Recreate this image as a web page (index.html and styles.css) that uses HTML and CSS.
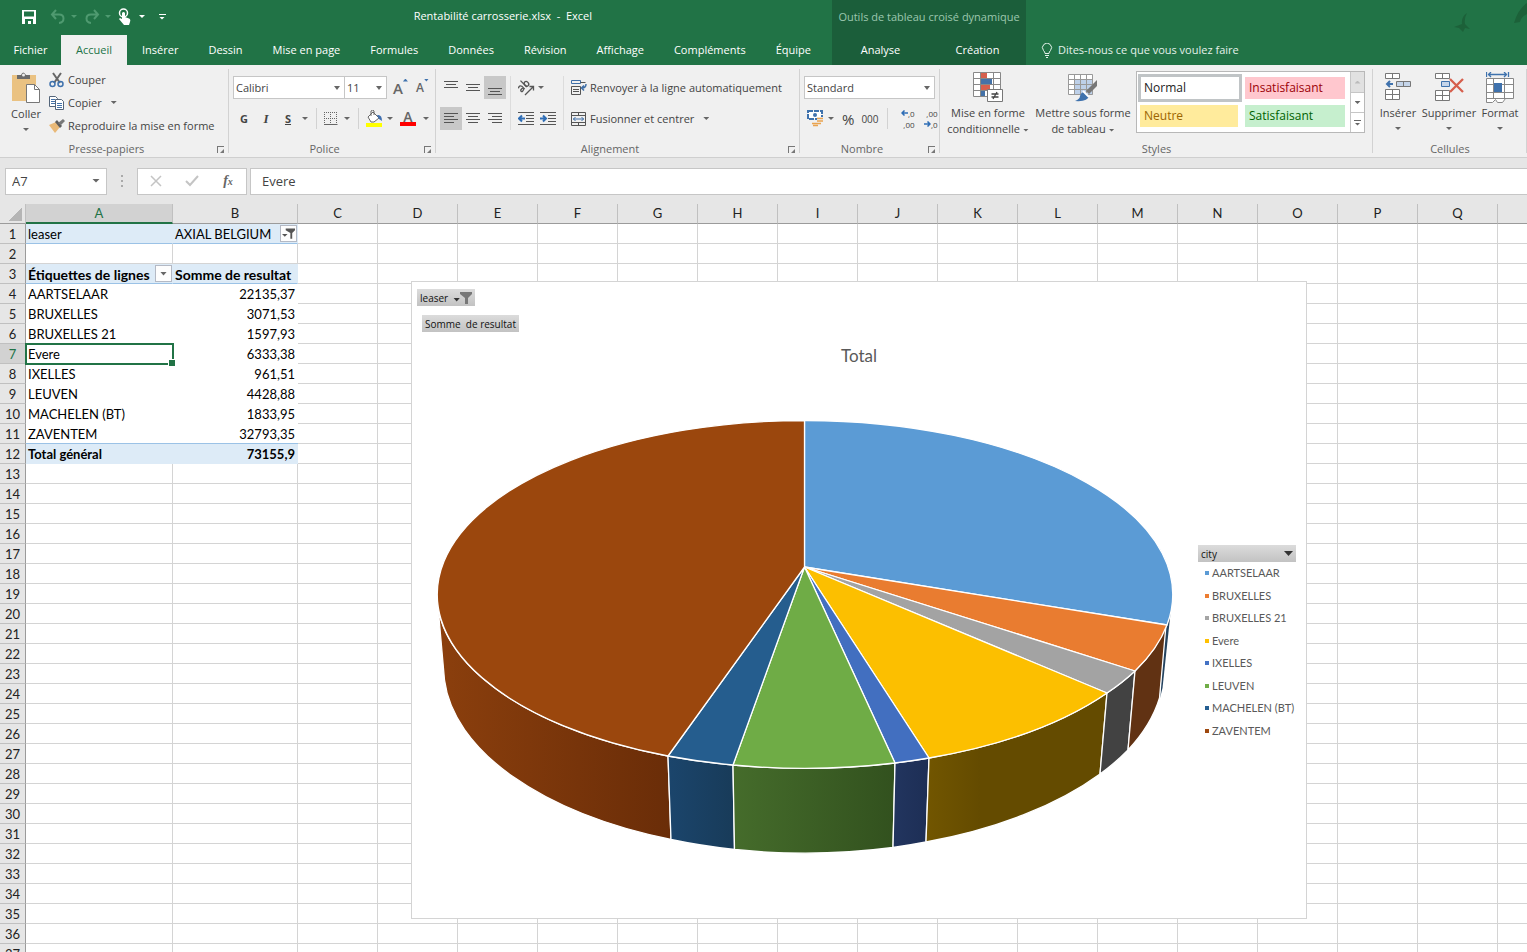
FILE: index.html
```html
<!DOCTYPE html>
<html lang="fr">
<head>
<meta charset="utf-8">
<title>Rentabilité carrosserie.xlsx - Excel</title>
<link rel="stylesheet" href="styles.css">
</head>
<body>
<header class="top">
  <div class="quick">
    <button class="ico" aria-label="Enregistrer"><svg width="16" height="16" viewBox="0 0 16 16"><path d="M1 1h14v14H1z" fill="#fff"/><path d="M3 2.500h10v5H3zM4 10h8v5h-2v-3H7v3H4z" fill="#217346"/></svg></button>
    <button class="ico dim" aria-label="Annuler"><svg width="16" height="16" viewBox="0 0 16 16" fill="none" stroke="#4f9a70" stroke-width="2"><path d="M6 1L2 5.500L6 10M2 5.500h7c6 0 6 8 0 8.500"/></svg><i class="arr"></i></button>
    <button class="ico dim" aria-label="Rétablir"><svg width="16" height="16" viewBox="0 0 16 16" fill="none" stroke="#4f9a70" stroke-width="2"><path d="M10 1l4 4.500L10 10M14 5.500H7c-6 0-6 8 0 8.500"/></svg><i class="arr"></i></button>
    <button class="ico touch" aria-label="Mode tactile"><svg width="14" height="18" viewBox="0 0 14 18"><circle cx="5.500" cy="5" r="4" fill="none" stroke="#fff" stroke-width="1.500"/><path d="M4 5q1.500-2 3 0v4l4 1.500q2 1 1 3.500l-1 3H6L1 11l1-1 2 1z" fill="#fff"/></svg><i class="arr"></i></button>
    <button class="ico more" aria-label="Personnaliser"><i class="bar"></i><i class="arr"></i></button>
  </div>
  <h1 class="doc">Rentabilité carrosserie.xlsx&nbsp; -&nbsp; Excel</h1>
  <svg class="birds" width="80" height="40" viewBox="0 0 80 40" fill="#1c6139"><path d="M20 13q-6 4-5 11l-8 3 5 1 4 4 2-4 5 1-5-5q-1-6 2-11zM80 3q-9 6-13 20l6-1q1-5 7-8z"/></svg>
  <nav class="tabs">
    <a href="#" class="tab file">Fichier</a><a href="#" class="tab on">Accueil</a><a href="#" class="tab">Insérer</a><a href="#" class="tab">Dessin</a><a href="#" class="tab">Mise en page</a><a href="#" class="tab">Formules</a><a href="#" class="tab">Données</a><a href="#" class="tab">Révision</a><a href="#" class="tab">Affichage</a><a href="#" class="tab">Compléments</a><a href="#" class="tab">Équipe</a>
  </nav>
  <div class="context">
    <span class="context-name">Outils de tableau croisé dynamique</span>
    <div class="context-tabs"><a href="#" class="tab">Analyse</a><a href="#" class="tab">Création</a></div>
  </div>
  <button class="tell"><svg width="12" height="15" viewBox="0 0 12 15" fill="none" stroke="#e4f1ea"><path d="M4 10.500Q4 9 2.500 7.500a4.500 4.500 0 1 1 7 0Q8 9 8 10.500zM4 12.500h4M5 14.500h2"/></svg>Dites-nous ce que vous voulez faire</button>
</header>

<section class="ribbon">
  <div class="group clip">
    <div class="body">
      <button class="big"><svg width="30" height="32" viewBox="0 0 30 32"><path d="M1 3h24v26H1z" fill="#eac282"/><path d="M6 7V3h4q2-5 5 0h4v4z" fill="#6b6b6b"/><circle cx="12.500" cy="3" r="1.500" fill="#eee"/><path d="M15.500 12.500h8l5 5v13h-13z" fill="#fff" stroke="#777"/><path d="M23.500 12.500v5h5" fill="none" stroke="#777"/></svg><span>Coller</span><i class="arr"></i></button>
      <div class="stack">
        <button><svg width="16" height="16" viewBox="0 0 16 16" fill="none"><path d="M4 1l7 10M12 1L5 11" stroke="#666" stroke-width="2"/><circle cx="3.500" cy="12" r="2.500" stroke="#3f72ad" stroke-width="1.500"/><circle cx="11.500" cy="12" r="2.500" stroke="#3f72ad" stroke-width="1.500"/></svg>Couper</button>
        <button><svg width="16" height="16" viewBox="0 0 16 16" fill="#fff" stroke="#54657a"><path d="M.5 1.500h6l2 2v8h-8z"/><path d="M2 4.500h4M2 6.500h4M2 8.500h4" stroke="#4472a8"/><path d="M6.500 4.500h6l2 2v8h-8z"/><path d="M8 8.500h5M8 10.500h5M8 12.500h5" stroke="#4472a8"/></svg>Copier<i class="arr far"></i></button>
        <button><svg width="16" height="16" viewBox="0 0 16 16"><path d="M0 7l7-3 4 5-5 6z" fill="#e9b978"/><path d="M6 4l2-2 5 6-2 2z" fill="#5d5d5d"/><path d="M9 5l5-4 2 2-4 4z" fill="#777"/></svg>Reproduire la mise en forme</button>
      </div>
    </div>
    <div class="foot"><span>Presse-papiers</span><button class="launch" aria-label="Options du presse-papiers"></button></div>
  </div>

  <div class="group font">
    <div class="body rows">
      <div class="line">
        <label class="combo name"><select aria-label="Police"><option>Calibri</option></select></label><label class="combo size"><select aria-label="Taille"><option>11</option></select></label>
        <button class="grow">A<i class="up"></i></button><button class="shrink">A<i class="down"></i></button>
      </div>
      <div class="line marks">
        <button class="m b">G</button><button class="m it">I</button><button class="m u">S</button><i class="arr"></i><i class="sep"></i>
        <button class="pic" aria-label="Bordures"><svg width="14" height="14" viewBox="0 0 14 14" stroke="#666"><path d="M.5 0v12M6.500 0v12M12.500 0v12M0 .5h13M0 6.500h13" stroke-dasharray="1 1"/><path d="M0 12.500h13.500"/></svg><i class="arr"></i></button><i class="sep"></i>
        <button class="pic" aria-label="Couleur de remplissage"><svg width="17" height="17" viewBox="0 0 17 17"><path d="M2 7l5-5 6 6-5 4H5z" fill="#fff" stroke="#666"/><path d="M5 6V1q2-2 3 0v4" fill="none" stroke="#666"/><path d="M11 5q5-1 5 6l-3-2z" fill="#3f6fb0"/><path d="M0 13h16v4H0z" fill="#ff0"/></svg><i class="arr"></i></button>
        <button class="pic color" aria-label="Couleur de police"><span>A</span><i class="arr"></i></button>
      </div>
    </div>
    <div class="foot"><span>Police</span><button class="launch" aria-label="Options de police"></button></div>
  </div>

  <div class="group align">
    <div class="body">
      <div class="aligns">
        <button class="a" aria-label="Haut"><svg width="14" height="14" viewBox="0 0 14 14" stroke="#555"><path d="M0 .5h14M2 3.500h10M0 6.500h14"/></svg></button>
        <button class="a" aria-label="Milieu"><svg width="14" height="14" viewBox="0 0 14 14" stroke="#555"><path d="M0 3.500h14M2 6.500h10M0 9.500h14"/></svg></button>
        <button class="a sel" aria-label="Bas"><svg width="14" height="14" viewBox="0 0 14 14" stroke="#555"><path d="M0 7.500h14M2 10.500h10M0 13.500h14"/></svg></button>
        <button class="a sel" aria-label="Gauche"><svg width="14" height="14" viewBox="0 0 14 14" stroke="#555"><path d="M0 1.500h14M0 4.500h10M0 7.500h14M0 10.500h10"/></svg></button>
        <button class="a" aria-label="Centre"><svg width="14" height="14" viewBox="0 0 14 14" stroke="#555"><path d="M0 1.500h14M2 4.500h10M0 7.500h14M2 10.500h10"/></svg></button>
        <button class="a" aria-label="Droite"><svg width="14" height="14" viewBox="0 0 14 14" stroke="#555"><path d="M0 1.500h14M4 4.500h10M0 7.500h14M4 10.500h10"/></svg></button>
      </div>
      <div class="orient">
        <button class="pic" aria-label="Orientation"><svg width="17" height="17" viewBox="0 0 17 17" fill="none" stroke="#555"><g transform="rotate(-45 6 8)" stroke-width="1.300"><path d="M1 5q3-2 4 1v4M5 8q-4-1-4 1t4 0"/><path d="M8 1v9"/><ellipse cx="10" cy="7.500" rx="2" ry="2.500"/></g><path d="M7 16l8-8M11.500 7.500h4v4" stroke-width="1.300"/></svg><i class="arr"></i></button>
        <div class="indents">
          <button class="pic" aria-label="Diminuer le retrait"><svg width="16" height="14" viewBox="0 0 16 14" stroke="#555"><path d="M0 .5h16M8 3.500h8M8 6.500h8M8 9.500h8M0 12.500h16"/><path d="M7 6.500H1M4 3.500L1 6.500l3 3" stroke="#2e6db5" stroke-width="2" fill="none"/></svg></button>
          <button class="pic" aria-label="Augmenter le retrait"><svg width="16" height="14" viewBox="0 0 16 14" stroke="#555"><path d="M0 .5h16M8 3.500h8M8 6.500h8M8 9.500h8M0 12.500h16"/><path d="M0 6.500h6M3 3.500l3 3-3 3" stroke="#2e6db5" stroke-width="2" fill="none"/></svg></button>
        </div>
      </div>
      <div class="wraps">
        <button><svg width="16" height="16" viewBox="0 0 16 16" fill="none" stroke="#555"><path d="M.5.5h9v3h-9z" stroke="#3f6fa8"/><path d="M.5 6.500h9v8h-9z"/><path d="M9.500 2.500h5M2 9.500h6M2 11.500h6"/><path d="M15 4q0 4-4 4M13 5.500L10.500 8l2.500 2.500" stroke="#3f6fa8" stroke-width="1.500"/></svg>Renvoyer à la ligne automatiquement</button>
        <button><svg width="16" height="16" viewBox="0 0 16 16" fill="none" stroke="#555"><path d="M.5 1.500h14v13H.5zM.5 4.500h14M.5 11.500h14M7.500 1v3M7.500 12v3"/><path d="M2 8h11M4.500 6L2.500 8l2 2M10.500 6l2 2-2 2" stroke="#3f6fa8"/></svg>Fusionner et centrer<i class="arr far"></i></button>
      </div>
    </div>
    <div class="foot"><span>Alignement</span><button class="launch" aria-label="Options d'alignement"></button></div>
  </div>

  <div class="group number">
    <div class="body rows">
      <div class="line"><label class="combo fmt"><select aria-label="Format de nombre"><option>Standard</option></select></label></div>
      <div class="line nums">
        <button class="pic" aria-label="Format comptable"><svg width="17" height="17" viewBox="0 0 17 17"><path d="M1 1h14v8H1z" fill="#fff" stroke="#3f72ad" stroke-width="2" stroke-dasharray="5 1"/><circle cx="8" cy="5" r="2" fill="#3f72ad"/><path d="M10 7h6v9H5v-4h5z" fill="#f0f0f0"/><path d="M10 8.500h6M10 11h6M5 13.500h5M10 13.500h4M6 15.500h5" stroke="#e9a34f" stroke-width="1.500"/></svg><i class="arr"></i></button>
        <button class="pct">%</button><button class="mil">000</button><i class="sep"></i>
        <button class="dec" aria-label="Ajouter une décimale"><span><svg width="7" height="6" viewBox="0 0 7 6" fill="none" stroke="#2e6db5" stroke-width="1.500"><path d="M7 3H1M3.500 .5L1 3l2.500 2.500"/></svg>,0</span><span>,00</span></button><button class="dec" aria-label="Réduire les décimales"><span>,00</span><span><svg width="7" height="6" viewBox="0 0 7 6" fill="none" stroke="#2e6db5" stroke-width="1.500"><path d="M0 3h6M3.500 .5L6 3 3.500 5.500"/></svg>,0</span></button>
      </div>
    </div>
    <div class="foot"><span>Nombre</span><button class="launch" aria-label="Options de nombre"></button></div>
  </div>

  <div class="group styles">
    <div class="body">
      <button class="big cond"><svg width="30" height="31" viewBox="0 0 30 31"><path d="M.5.5h27v24H.5z" fill="#fff"/><path d="M8 1h6v5H8zM8 13h9v5H8z" fill="#d65f4d"/><path d="M8 7h11v5H8zM8 19h4v6H8z" fill="#4472a8"/><path d="M.5.5h27v24H.5zM7.500.5v24M20.500.5v24M.5 6.500h27M.5 12.500h27M.5 18.500h27" fill="none" stroke="#888"/><path d="M14.500 17.500h15v12h-15z" fill="#fff" stroke="#777"/><path d="M18.500 22h7M18.500 25h7M24 20l-4 7" stroke="#444" stroke-width="1.300"/></svg><span>Mise en forme<br>conditionnelle <i class="arr"></i></span></button>
      <button class="big tabl"><svg width="30" height="31" viewBox="0 0 30 31"><path d="M.5 2.500h24v20H.5z" fill="#fff"/><path d="M7 8h18v15H7z" fill="#bdd0e9"/><path d="M.5 2.500h24v20H.5zM6.500 2.500v20M12.500 2.500v20M18.500 2.500v20M.5 7.500h24M.5 12.500h24M.5 17.500h24" fill="none" stroke="#999"/><path d="M29 8v6l-8 8-3-3z" fill="#777"/><path d="M17 20l4 4q-1 6-14 5 5-2 5-5 1-4 5-4z" fill="#3f72ad"/><path d="M15 19l6 6" stroke="#fff" stroke-width="2"/></svg><span>Mettre sous forme<br>de tableau <i class="arr"></i></span></button>
      <div class="gallery">
        <div class="swatches"><button class="sw normal">Normal</button><button class="sw bad">Insatisfaisant</button><button class="sw neutral">Neutre</button><button class="sw good">Satisfaisant</button></div>
        <div class="scroll"><button class="off" aria-label="Précédent"><i class="tri-up"></i></button><button aria-label="Suivant"><i class="arr"></i></button><button aria-label="Plus"><i class="bar"></i><i class="arr"></i></button></div>
      </div>
    </div>
    <div class="foot"><span>Styles</span></div>
  </div>

  <div class="group cells">
    <div class="body">
      <button class="big"><svg width="28" height="31" viewBox="0 0 28 31" fill="#fff" stroke="#777"><path d="M1.500 1.500h14v5h-14zM8.500 1.500v5M1.500 17.500h14v10h-14zM8.500 17.500v10M1.500 22.500h14"/><path d="M12.500 9.500h14v5h-14zM19.500 9.500v5" fill="#c5d5ea"/><path d="M9 12H3M6 9l-3 3 3 3" fill="none" stroke="#3f72ad" stroke-width="2"/></svg><span>Insérer</span><i class="arr"></i></button>
      <button class="big"><svg width="30" height="31" viewBox="0 0 30 31" fill="#fff" stroke="#777"><path d="M1.500 1.500h14v5h-14zM8.500 1.500v5M1.500 18.500h14v10h-14zM8.500 18.500v10M1.500 23.500h14"/><path d="M7.500 9.500h8v5h-8z" fill="#c5d5ea" stroke="#3f72ad"/><path d="M16 7l13 13M29 7L16 20" stroke="#d65f4d" stroke-width="2.300"/></svg><span>Supprimer</span><i class="arr"></i></button>
      <button class="big"><svg width="28" height="31" viewBox="0 0 28 31" fill="#fff" stroke="#888"><path d="M.5 6.500h27v20h-8l-3 4h-5l-2-3-3 3h-6zM.5 12.500h27M.5 20.500h27M.5 26.500h20M7.500 6.500v20M18.500 6.500v20"/><path d="M8 11h8v9H8z" fill="#3f72ad" stroke="none"/><path d="M.5 0v5M22.500 0v5M2 2.500h19M5 0L2.500 2.500 5 5M18 0l2.500 2.500L18 5" fill="none" stroke="#3f72ad" stroke-width="1.300"/></svg><span>Format</span><i class="arr"></i></button>
    </div>
    <div class="foot"><span>Cellules</span></div>
  </div>
</section>

<section class="formula">
  <div class="combo ref"><input value="A7" aria-label="Zone Nom"></div>
  <i class="dots"></i>
  <div class="fx">
    <button aria-label="Annuler"><svg width="12" height="12" viewBox="0 0 12 12" stroke="#c4c4c4" stroke-width="1.500"><path d="M1 1l10 10M11 1L1 11"/></svg></button>
    <button aria-label="Entrer"><svg width="14" height="12" viewBox="0 0 14 12" fill="none" stroke="#c4c4c4" stroke-width="2"><path d="M1 6l4 4 8-9"/></svg></button>
    <button class="f" aria-label="Insérer une fonction"><em>f</em><sub>x</sub></button>
  </div>
  <input class="entry" value="Evere" aria-label="Barre de formule">
</section>

<main class="sheet">
  <table class="grid" id="grid"><colgroup><col class="c-num"><col class="c-a"><col class="c-b"></colgroup><thead></thead><tbody></tbody></table>
  <figure class="chart">
    <div class="fields">
      <button class="field">leaser<i class="arr"></i><svg width="12" height="12" viewBox="0 0 12 12" fill="#777"><path d="M0 0h12v2L8 6v6H5V6L0 2z"/></svg></button>
      <button class="field sum">Somme &nbsp;de resultat</button>
    </div>
    <figcaption>Total</figcaption>
    <div class="plot">
      <svg class="pie" width="738" height="436" viewBox="436 419 738 436" id="pie">
        <defs>
          <linearGradient id="g1"><stop offset="0" stop-color="#8b3f0d"/><stop offset="1" stop-color="#6a2d08"/></linearGradient>
          <linearGradient id="g2"><stop offset="0" stop-color="#1b456c"/><stop offset="1" stop-color="#183b59"/></linearGradient>
          <linearGradient id="g3"><stop offset="0" stop-color="#456c2b"/><stop offset="1" stop-color="#32511e"/></linearGradient>
          <linearGradient id="g4"><stop offset="0" stop-color="#22355f"/><stop offset="1" stop-color="#1d2e55"/></linearGradient>
          <linearGradient id="g5"><stop offset="0" stop-color="#725600"/><stop offset=".3" stop-color="#644b00"/><stop offset="1" stop-color="#644b00"/></linearGradient>
        </defs>
        <g stroke="#fff" stroke-width="1.300" stroke-linejoin="round">
          <path fill="url(#g1)" d="M437 595A367.500 174 0 0 0 668 756L671 839.500A360 185 0 0 1 444.500 680Z"/>
          <path fill="url(#g2)" d="M668 756A367.500 174 0 0 0 733 765L734.500 849.500A360 185 0 0 1 671 839.500Z"/>
          <path fill="url(#g3)" d="M733 765A367.500 174 0 0 0 895 763L893 847.500A360 185 0 0 1 734.500 849.500Z"/>
          <path fill="url(#g4)" d="M895 763A367.500 174 0 0 0 929 758L926 842A360 185 0 0 1 893 847.500Z"/>
          <path fill="url(#g5)" d="M929 758A367.500 174 0 0 0 1107 693L1100 774A360 185 0 0 1 926 842Z"/>
          <path fill="#424242" d="M1107 693A367.500 174 0 0 0 1135 671L1128 750A360 185 0 0 1 1100 774Z"/>
          <path fill="#24435f" stroke="none" d="M1165 625L1171.500 604L1162.500 688L1160 698Z"/>
          <path fill="#613213" d="M1135 671A367.500 174 0 0 0 1166 625L1159.500 698A360 185 0 0 1 1128 750Z"/>
          <path fill="#5b9bd5" d="M804.500 567V420.500A367.500 174 0 0 1 1167 625Z"/>
          <path fill="#e97c30" d="M804.500 567L1167 625A367.500 174 0 0 1 1135 671Z"/>
          <path fill="#a3a3a3" d="M804.500 567L1135 671A367.500 174 0 0 1 1107 693Z"/>
          <path fill="#fcbf00" d="M804.500 567L1107 693A367.500 174 0 0 1 929 758Z"/>
          <path fill="#426fc0" d="M804.500 567L929 758A367.500 174 0 0 1 895 763Z"/>
          <path fill="#6fac46" d="M804.500 567L895 763A367.500 174 0 0 1 733 765Z"/>
          <path fill="#255d8e" d="M804.500 567L733 765A367.500 174 0 0 1 668 756Z"/>
          <path fill="#9b470d" d="M804.500 567L668 756A367.500 174 0 0 1 804.500 420.500Z"/>
        </g>
      </svg>
      <div class="side">
        <button class="field city">city<i class="arr"></i></button>
        <ul class="legend"><li class="k1">AARTSELAAR</li><li class="k2">BRUXELLES</li><li class="k3">BRUXELLES 21</li><li class="k4">Evere</li><li class="k5">IXELLES</li><li class="k6">LEUVEN</li><li class="k7">MACHELEN (BT)</li><li class="k8">ZAVENTEM</li></ul>
      </div>
    </div>
  </figure>
</main>
<script src="grid.js"></script>
</body>
</html>
```

FILE: grid.js
```js
const letters = 'ABCDEFGHIJKLMNOPQ'.split('').concat('');
const values = {
  1: ['leaser', 'AXIAL BELGIUM'], 3: ['Étiquettes de lignes', 'Somme de resultat'],
  4: ['AARTSELAAR', '22135,37'], 5: ['BRUXELLES', '3071,53'], 6: ['BRUXELLES 21', '1597,93'],
  7: ['Evere', '6333,38'], 8: ['IXELLES', '961,51'], 9: ['LEUVEN', '4428,88'],
  10: ['MACHELEN (BT)', '1833,95'], 11: ['ZAVENTEM', '32793,35'], 12: ['Total général', '73155,9']
};
const filter = '<button class="filter" aria-label="Filtre"><svg width="13" height="12" viewBox="0 0 14 12" fill="#555"><path d="M4 0h10v2l-3 3v6H9V5L4 2zM0 6h6L3 9z"/></svg></button>';
const drop = '<button class="filter" aria-label="Trier"><i class="arr"></i></button>';
const grid = document.getElementById('grid');
grid.tHead.innerHTML = '<tr><th class="corner"></th>' + letters.map((l, i) => `<th${i ? '' : ' class="on"'}>${l}</th>`).join('') + '</tr>';
let html = '';
for (let r = 1; r <= 37; r++) {
  const v = values[r] || ['', ''];
  const band = r === 1 ? 'band' : r === 3 ? 'band titles strong' : r === 12 ? 'band total strong' : r > 3 && r < 12 ? 'data' : '';
  html += `<tr class="${band}"><th${r === 7 ? ' class="on"' : ''}>${r}</th>`;
  html += `<td${r === 7 ? ' class="active"' : ''}>${v[0]}${r === 3 ? drop : ''}</td>`;
  html += `<td${r > 3 ? ' class="num"' : ''}>${v[1]}${r === 1 ? filter : ''}</td>`;
  html += '<td></td>'.repeat(letters.length - 2) + '</tr>';
}
grid.tBodies[0].innerHTML = html;
```

FILE: styles.css
```css
* { box-sizing: border-box; }
body { margin: 0; height: 100vh; display: flex; flex-direction: column; overflow: hidden; background: #e6e6e6; color: #444; font: 11px/16px "Open Sans", "Noto Sans", sans-serif; }
button { border: 0; padding: 0; background: none; color: inherit; font: inherit; white-space: nowrap; display: flex; align-items: center; }
input, select { font: inherit; color: inherit; border: 0; outline: 0; appearance: none; border-radius: 0; min-width: 0; }
a { text-decoration: none; color: inherit; }
svg { flex: none; display: block; }
.arr { flex: none; display: inline-block; width: 6px; height: 3px; background: #666; clip-path: polygon(0 0, 100% 0, 50% 100%); }
.bar { display: block; width: 7px; height: 1px; background: #666; }

.top { flex: none; display: grid; grid-template: 33px 32px / auto auto 1fr; background: #217346; color: #fff; position: relative; }
.quick { grid-area: 1 / 1; display: flex; align-items: center; padding-left: 21px; }
.quick .ico { gap: 5px; width: 34px; }
.quick .ico:first-child { width: 29px; }
.quick .arr { background: #fff; }
.quick .dim .arr { background: #4f9a70; }
.quick .bar { background: #fff; }
.quick .touch { width: 40px; gap: 7px; }
.quick .more { flex-direction: column; gap: 2px; width: 8px; }
.doc { grid-area: 1 / 1; justify-self: end; align-self: center; margin: 0; padding-right: 240px; font-size: 11px; font-weight: 400; white-space: nowrap; line-height: 18px; padding-bottom: 2px; }
.tabs { grid-area: 2 / 1; display: flex; width: 832px; padding-top: 2px; }
.tab { flex: none; display: flex; justify-content: center; align-items: center; padding: 0 15px; white-space: nowrap; }
.tabs .file { width: 61px; padding: 0; }
.tabs .on { width: 66px; padding: 0; background: #f0f0f0; color: #217346; }
.context { grid-area: 1 / 2 / 3 / 3; width: 194px; background: #1b5e3a; display: grid; grid-template-rows: 33px 32px; }
.context-name { place-self: center; color: #9cc7ae; white-space: nowrap; }
.context-tabs { display: grid; grid-template-columns: 1fr 1fr; padding-top: 2px; }
.tell { grid-area: 2 / 3; padding: 2px 0 0 15px; gap: 5px; color: #e4f1ea; }
.birds { grid-area: 1 / 3; justify-self: end; }

.ribbon { flex: none; display: flex; height: 93px; background: #f0f0f0; border-bottom: 1px solid #cfcfcf; }
.group { flex: none; display: flex; flex-direction: column; position: relative; padding-top: 6px; }
.group::after { content: ""; position: absolute; right: 0; top: 4px; bottom: 4px; width: 1px; background: #d2d2d2; }
.clip { width: 229px; } .font { width: 207px; } .align { width: 364px; } .number { width: 140px; } .styles { width: 433px; } .cells { width: 154px; }
.body { flex: 1; display: flex; align-items: flex-start; }
.foot { height: 16px; display: flex; justify-content: center; padding-right: 16px; color: #666; position: relative; }
.styles .foot, .cells .foot { padding-right: 0; }
.launch { position: absolute; right: 5px; top: 5px; width: 7px; height: 7px; border: solid #777; border-width: 1px 0 0 1px; }
.launch::after { content: ""; position: absolute; right: 0; bottom: 0; width: 4px; height: 4px; background: #777; clip-path: polygon(100% 0, 100% 100%, 0 100%); }
.big { flex-direction: column; line-height: 16px; }
.clip .big { width: 48px; padding: 1px 0 0 4px; }
.clip .big span, .cells .big span { padding: 3px 0 6px; }
.clip .big span { padding-top: 2px; }
.stack { display: grid; grid-template-rows: repeat(3, 23px); margin: -3px 0 0 1px; }
.stack button { gap: 3px; }
.far { margin-left: 6px; }
.rows { flex-direction: column; gap: 8px; padding: 5px 0 0 4px; }
.line { display: flex; align-items: center; height: 23px; }
.combo { position: relative; display: flex; height: 23px; border: 1px solid #c6c6c6; background: #fff; }
.combo select, .combo input { flex: 1; padding: 0 2px; background: transparent; }
.combo::after { content: ""; position: absolute; right: 4px; top: 9px; width: 6px; height: 4px; background: #666; clip-path: polygon(0 0, 100% 0, 50% 100%); pointer-events: none; }
.name { width: 112px; } .size { width: 43px; margin-left: -1px; } .fmt { width: 131px; }
.grow, .shrink { align-items: baseline; line-height: 18px; font-weight: 600; color: #666; }
.grow { font-size: 15px; margin-left: 6px; }
.shrink { font-size: 12px; margin-left: 8px; }
.up, .down { width: 5px; height: 3px; background: #3f72ad; align-self: flex-start; clip-path: polygon(50% 0, 100% 100%, 0 100%); }
.down { clip-path: polygon(0 0, 100% 0, 50% 100%); }
.marks .m { width: 22px; justify-content: center; font-weight: 700; }
.marks .it { font-style: italic; font-family: "Liberation Serif", serif; font-size: 13px; }
.marks .u { text-decoration: underline; }
.marks > .arr { margin-left: 3px; }
.sep { flex: none; width: 1px; height: 21px; background: #d2d2d2; margin: 0 7px; }
.marks .sep { margin-left: 8px; }
.pic { gap: 7px; }
.marks .pic { gap: 6px; }
.marks .pic + .pic { gap: 7px; }
.marks .pic:nth-of-type(5) { gap: 4px; }
.color span { width: 16px; height: 15px; line-height: 12px; font-size: 14px; font-weight: 600; color: #666; border-bottom: 4px solid #f00; }
.color { margin-left: 7px; }
.aligns { display: grid; grid-template-columns: repeat(3, 22px); grid-auto-rows: 23px; row-gap: 8px; padding: 5px 0 0 4px; }
.a { justify-content: center; }
.sel { background: #c8c8c8; }
.orient { display: grid; grid-template-rows: 23px 23px; row-gap: 8px; margin: 5px 0 0 4px; padding: 0 7px; border: solid #dcdcdc; border-width: 0 1px; }
.orient .pic { gap: 3px; }
.indents { display: flex; gap: 6px; }
.wraps { display: grid; grid-template-rows: 23px 23px; row-gap: 8px; padding: 5px 0 0 7px; }
.wraps button { gap: 3px; }
.nums { padding-left: 3px; }
.nums .pic { gap: 4px; }
.pct { font-size: 15px; margin-left: 8px; }
.mil { font-size: 10px; margin-left: 7px; }
.nums .sep { margin: 0 4px 0 8px; }
.dec { flex-direction: column; align-items: flex-end; width: 23px; font-size: 8px; line-height: 11px; }
.dec span { display: flex; align-items: center; }
.styles .body { padding: 1px 0 0 6px; }
.cond, .tabl { text-align: center; }
.cond { width: 84px; } .tabl { width: 106px; }
.cond span, .tabl span { padding-top: 2px; }
.cond .arr, .tabl .arr { vertical-align: middle; }
.gallery { display: flex; width: 229px; height: 62px; margin-top: -1px; border: 1px solid #b8b8b8; background: #fff; }
.swatches { flex: 1; display: grid; grid-template: 28px 28px / 106px 1fr; padding-top: 2px; font-size: 12px; }
.sw { height: 22px; margin: 3px 5px 3px 3px; padding-left: 4px; }
.normal { height: 28px; margin: 0 1px; padding-left: 3px; border: 3px solid #c0c4c6; color: #222; }
.bad { background: #ffc7ce; color: #9c0006; } .neutral { background: #ffeb9c; color: #9c6500; } .good { background: #c6efce; color: #006100; }
.bad, .good { margin-left: 2px; }
.scroll { width: 14px; display: grid; grid-template-rows: repeat(3, 1fr); border-left: 1px solid #c6c6c6; }
.scroll button { flex-direction: column; justify-content: center; gap: 2px; border-top: 1px solid #c6c6c6; }
.scroll .off { background: #e1e1e1; border: 0; }
.tri-up { width: 6px; height: 3px; background: #bbb; clip-path: polygon(50% 0, 100% 100%, 0 100%); }
.cells .body { display: grid; grid-template-columns: 50px 52px 50px; padding-top: 1px; }
.cells .big span { padding-top: 2px; }

.formula { flex: none; display: flex; align-items: center; height: 46px; padding-left: 5px; font-size: 12px; }
.ref { width: 102px; height: 27px; }
.ref input { padding-left: 6px; }
.ref::after { top: 10px; width: 8px; right: 6px; }
.dots { width: 2px; height: 12px; margin: 0 14px; background: repeating-linear-gradient(#aaa 0 2px, transparent 2px 5px); }
.fx { display: grid; grid-template-columns: repeat(3, 1fr); width: 110px; height: 27px; border: 1px solid #c6c6c6; background: #fff; }
.fx button { justify-content: center; }
.fx .f { font: italic 700 14px "Liberation Serif", serif; color: #666; }
.f sub { font-size: 10px; }
.entry { flex: 1; height: 27px; margin-left: 3px; padding: 0 11px; border: 1px solid #c6c6c6; border-right: 0; background: #fff; }
.formula input { font-size: 13px; }

.sheet { flex: 1; min-height: 0; overflow: hidden; position: relative; background: #fff; color: #000; font: 13px/17px Lato, sans-serif; }
.grid { width: 1578px; table-layout: fixed; border-collapse: separate; border-spacing: 0; }
.c-num { width: 26px; } .c-a { width: 147px; } .c-b { width: 125px; }
.grid th { height: 20px; padding: 2px 0 0; font-weight: 400; background: #e6e6e6; color: #222; border: solid #c0c0c0; border-width: 0 1px 1px 0; }
.grid thead th { padding: 1px 0; border-bottom-color: #9b9b9b; }
.grid tbody th { border-right-color: #9b9b9b; }
.grid .corner { background: linear-gradient(135deg, transparent 50%, #b5b5b5 50%) 9px 4px / 13px 13px no-repeat #e6e6e6; }
.grid th.on { background: #d2d2d2; color: #217346; }
.grid thead th.on { padding: 1px 0 0; border-bottom: 2px solid #217346; }
.grid td { height: 20px; padding: 2px 2px 0; border: solid #d4d4d4; border-width: 0 1px 1px 0; white-space: nowrap; position: relative; }
.grid .num { text-align: right; }
.grid .band td:nth-child(-n+3) { background: #ddebf7; border-color: #ddebf7; border-bottom-color: #9bc2e6; }
.grid .total td:nth-child(-n+3) { border-bottom-color: #ddebf7; box-shadow: 0 -1px #9bc2e6; }
.grid .data td:nth-child(-n+3) { border-color: #fff; }
.strong td { font-weight: 700; }
.titles td { font-size: 14px; }
.grid .active { outline: 2px solid #217346; outline-offset: -1px; z-index: 1; }
.active::after { content: ""; position: absolute; right: -3px; bottom: -3px; width: 6px; height: 6px; background: #217346; border: solid #fff; border-width: 1px 0 0 1px; }
.filter { position: absolute; right: 0; top: 1px; width: 17px; height: 17px; justify-content: center; border: 1px solid #b4b9c4; background: #fdfdfd; }
.filter .arr { width: 7px; height: 4px; }

.chart { position: absolute; left: 411px; top: 77px; width: 896px; height: 638px; margin: 0; border: 1px solid #d4d4d4; background: #fff; display: flex; flex-direction: column; }
.fields { display: flex; flex-direction: column; align-items: flex-start; gap: 9px; padding: 7px 5px; }
.field { height: 17px; padding: 0 3px; background: linear-gradient(#dcdcdc, #c2c2c2); color: #111; font: 10px/16px "Open Sans", sans-serif; }
.field .arr { width: 7px; height: 4px; margin: 4px 0 0 5px; background: #333; }
.sum { margin-left: 5px; }
.chart figcaption { padding: 7px 0 0; text-align: center; color: #595959; font-size: 17px; line-height: 20px; }
.plot { display: flex; align-items: flex-start; padding: 53px 10px 0 24px; }
.side { flex: 1; margin: 126px 0 0 24px; }
.city { width: 98px; justify-content: space-between; }
.city .arr { width: 9px; height: 5px; margin: 0; }
.legend { list-style: none; margin: 0; padding: 0 0 0 7px; height: 180px; display: grid; grid-auto-rows: 1fr; color: #595959; font-size: 11px; line-height: 16px; }
.legend li { display: flex; align-items: center; gap: 3px; white-space: nowrap; }
.legend li::before { content: ""; width: 4px; height: 4px; background: currentColor; }
.k1::before { color: #5b9bd5; } .k2::before { color: #ed7d31; } .k3::before { color: #a5a5a5; } .k4::before { color: #ffc000; }
.k5::before { color: #4472c4; } .k6::before { color: #70ad47; } .k7::before { color: #255e91; } .k8::before { color: #9e480e; }
```
